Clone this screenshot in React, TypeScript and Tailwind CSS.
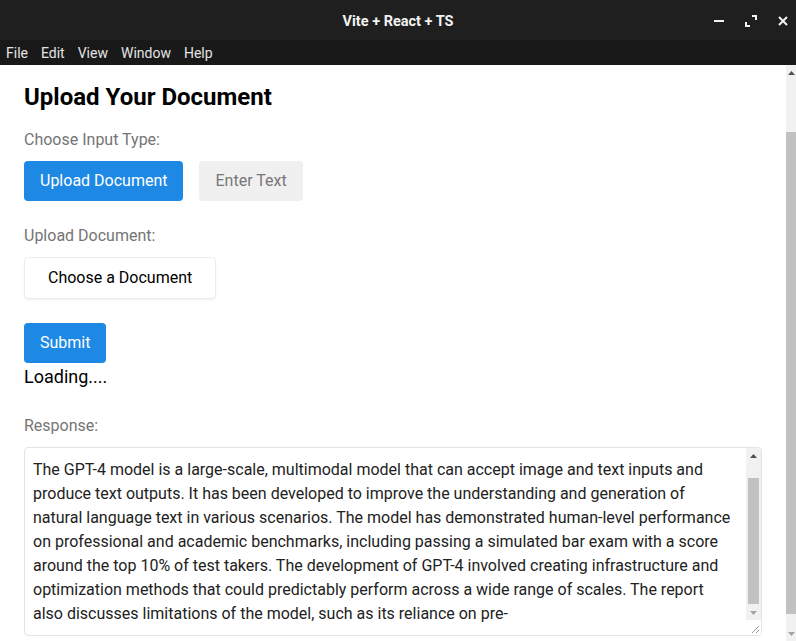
const responseText =
  "The GPT-4 model is a large-scale, multimodal model that can accept image and text inputs and produce text outputs. It has been developed to improve the understanding and generation of natural language text in various scenarios. The model has demonstrated human-level performance on professional and academic benchmarks, including passing a simulated bar exam with a score around the top 10% of test takers. The development of GPT-4 involved creating infrastructure and optimization methods that could predictably perform across a wide range of scales. The report also discusses limitations of the model, such as its reliance on pre-";

function TitleBar() {
  return (
    <div className="h-[40px] bg-[#1f1f1f] flex items-center relative">
      <div className="flex-1 text-center text-[14.5px] font-bold text-[#f2f2f2] pt-[4px]">
        Vite + React + TS
      </div>
      {/* window controls */}
      <div className="absolute right-0 top-0 h-full flex items-center gap-[18px] pr-[6px] pt-[2px]">
        <svg width="14" height="14" viewBox="0 0 14 14">
          <rect x="2" y="6" width="10" height="2" fill="#f2f2f2" />
        </svg>
        <svg width="14" height="14" viewBox="0 0 14 14">
          <path d="M8 2 H12 V6" stroke="#f2f2f2" strokeWidth="2" fill="none" />
          <path d="M2 8 V12 H6" stroke="#f2f2f2" strokeWidth="2" fill="none" />
        </svg>
        <svg width="14" height="14" viewBox="0 0 14 14">
          <path d="M3 3 L11 11 M11 3 L3 11" stroke="#f2f2f2" strokeWidth="2" />
        </svg>
      </div>
    </div>
  );
}

function MenuBar() {
  const items = ["File", "Edit", "View", "Window", "Help"];
  return (
    <div className="h-[25px] bg-[#191919] flex items-center gap-[13px] px-[6px] pt-[2px] text-[14px] text-[#e4e4e4]">
      {items.map((i) => (
        <span key={i}>{i}</span>
      ))}
    </div>
  );
}

function Arrow({ up }: { up?: boolean }) {
  return (
    <div className="h-[15px] flex items-center justify-center">
      <svg width="7" height="4" viewBox="0 0 7 4">
        {up ? (
          <path d="M0 4 L3.5 0 L7 4 Z" fill="#505050" />
        ) : (
          <path d="M0 0 L3.5 4 L7 0 Z" fill="#a3a3a3" />
        )}
      </svg>
    </div>
  );
}

function PageScrollbar() {
  return (
    <div className="w-[10px] bg-[#f1f1f1] flex flex-col">
      <Arrow up />
      <div className="flex-1 flex flex-col pt-[52px] pb-[12px]">
        <div className="flex-1 bg-[#c1c1c1]" />
      </div>
      <Arrow />
    </div>
  );
}

function ResponseBox() {
  return (
    <div className="mt-[9px] h-[189px] border border-[#e3e3e3] rounded-[4px] flex overflow-hidden">
      <div className="flex-1 overflow-hidden pl-[8px] pr-[10px] pt-[10px] text-[16px] leading-[24px] text-[#222]">
        {responseText}
      </div>
      <div className="w-[15px] bg-[#f1f1f1] flex flex-col">
        <Arrow up />
        <div className="flex-1 flex flex-col pt-[15px] pb-[1px] px-[2px]">
          <div className="flex-1 bg-[#c1c1c1]" />
        </div>
        <Arrow />
        <div className="h-[15px] bg-white flex items-end justify-end p-[2px]">
          <svg width="8" height="8" viewBox="0 0 8 8">
            <path d="M8 1 L1 8 M8 5 L5 8" stroke="#9a9a9a" strokeWidth="1" />
          </svg>
        </div>
      </div>
    </div>
  );
}

export default function App() {
  return (
    <div
      className="w-[796px] h-[641px] flex flex-col overflow-hidden bg-white"
      style={{ fontFamily: "Roboto, 'Noto Sans', sans-serif" }}
    >
      <TitleBar />
      <MenuBar />
      <div className="flex-1 flex min-h-0">
        <div className="flex-1 px-[24px] overflow-hidden">
          <h1 className="mt-[16px] text-[24px] leading-[32px] font-bold text-black">
            Upload Your Document
          </h1>

          <p className="mt-[15px] text-[16px] leading-[24px] text-[#757575]">
            Choose Input Type:
          </p>
          <div className="mt-[9px] flex gap-[16px]">
            <button
              type="button"
              className="h-[40px] px-[16px] rounded-[4px] bg-[#1e88e5] text-white text-[16px]"
            >
              Upload Document
            </button>
            <button
              type="button"
              className="h-[40px] px-[16px] rounded-[4px] bg-[#f0f0f0] text-[#777] text-[16px]"
            >
              Enter Text
            </button>
          </div>

          <p className="mt-[23px] text-[16px] leading-[24px] text-[#757575]">
            Upload Document:
          </p>
          <div className="mt-[9px] flex">
            <button
              type="button"
              className="h-[42px] px-[23px] rounded-[4px] bg-white border border-[#ececec] shadow-[0_1px_2px_rgba(0,0,0,0.06)] text-black text-[16px]"
            >
              Choose a Document
            </button>
          </div>

          <div className="mt-[24px] flex">
            <button
              type="button"
              className="h-[40px] px-[16px] rounded-[4px] bg-[#1e88e5] text-white text-[16px]"
            >
              Submit
            </button>
          </div>
          <p className="text-[18px] leading-[27px] text-black">Loading....</p>

          <p className="mt-[24px] text-[16px] leading-[24px] text-[#757575]">
            Response:
          </p>
          <ResponseBox />
        </div>
        <PageScrollbar />
      </div>
    </div>
  );
}
